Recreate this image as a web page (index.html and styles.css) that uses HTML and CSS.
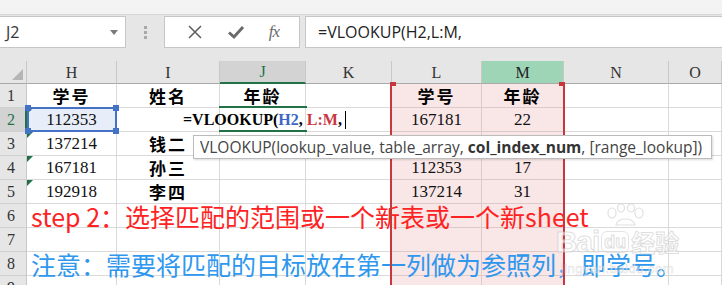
FILE: index.html
```html
<!DOCTYPE html>
<html lang="zh">
<head>
<meta charset="utf-8">
<link rel="stylesheet" href="styles.css">
</head>
<body>
<div class="app">
  <div class="topstrip"></div>
  <div class="fbar">
    <div class="namebox"><span class="nb-text">J2</span><svg class="caret" width="8" height="5" viewBox="0 0 8 5"><path d="M0 0H8L4 5Z" fill="#7a7a7a"/></svg></div>
    <div class="grip"><i></i><i></i><i></i></div>
    <div class="btns">
      <svg class="ico" width="16" height="16" viewBox="0 0 16 16"><path d="M2 2L14 14M14 2L2 14" stroke="#616161" stroke-width="1.6" fill="none"/></svg>
      <svg class="ico" width="18" height="16" viewBox="0 0 18 16"><path d="M2 8.5L7 13L16 3" stroke="#6a6a6a" stroke-width="3" fill="none"/></svg>
      <span class="fx">fx</span>
    </div>
    <div class="finput">=VLOOKUP(H2,L:M,</div>
  </div>
  <div class="sheet">
    <div class="cells">
      <div class="c hd corner"></div>
      <div class="c hd">H</div>
      <div class="c hd">I</div>
      <div class="c hd hd-sel">J</div>
      <div class="c hd">K</div>
      <div class="c hd">L</div>
      <div class="c hd hd-rng">M</div>
      <div class="c hd">N</div>
      <div class="c hd">O</div>

      <div class="c rh">1</div>
      <div class="c b">学号</div>
      <div class="c b">姓名</div>
      <div class="c b">年龄</div>
      <div class="c"></div>
      <div class="c pk b">学号</div>
      <div class="c pk b">年龄</div>
      <div class="c"></div>
      <div class="c"></div>

      <div class="c rh rh-sel">2</div>
      <div class="c tri hsel">112353</div>
      <div class="c"></div>
      <div class="c"></div>
      <div class="c"></div>
      <div class="c pk">167181</div>
      <div class="c pk">22</div>
      <div class="c"></div>
      <div class="c"></div>

      <div class="c rh">3</div>
      <div class="c tri">137214</div>
      <div class="c b">钱二</div>
      <div class="c"></div>
      <div class="c"></div>
      <div class="c pk">192918</div>
      <div class="c pk">25</div>
      <div class="c"></div>
      <div class="c"></div>

      <div class="c rh">4</div>
      <div class="c tri">167181</div>
      <div class="c b">孙三</div>
      <div class="c"></div>
      <div class="c"></div>
      <div class="c pk">112353</div>
      <div class="c pk">17</div>
      <div class="c"></div>
      <div class="c"></div>

      <div class="c rh">5</div>
      <div class="c tri">192918</div>
      <div class="c b">李四</div>
      <div class="c"></div>
      <div class="c"></div>
      <div class="c pk">137214</div>
      <div class="c pk">31</div>
      <div class="c"></div>
      <div class="c"></div>

      <div class="c rh">6</div>
      <div class="c"></div><div class="c"></div><div class="c"></div><div class="c"></div>
      <div class="c pk"></div><div class="c pk"></div><div class="c"></div><div class="c"></div>

      <div class="c rh">7</div>
      <div class="c"></div><div class="c"></div><div class="c"></div><div class="c"></div>
      <div class="c pk"></div><div class="c pk"></div><div class="c"></div><div class="c"></div>

      <div class="c rh">8</div>
      <div class="c"></div><div class="c"></div><div class="c"></div><div class="c"></div>
      <div class="c pk"></div><div class="c pk"></div><div class="c"></div><div class="c"></div>

      <div class="c rh">9</div>
      <div class="c"></div><div class="c"></div><div class="c"></div><div class="c"></div>
      <div class="c pk"></div><div class="c pk"></div><div class="c"></div><div class="c"></div>
    </div>

    <div class="overlay">
      <div class="ov-hsel"><i class="h tl"></i><i class="h tr"></i><i class="h bl"></i><i class="h br"></i></div>
      <div class="ov-active"></div>
      <div class="ov-range"><i class="rq rl"></i><i class="rq rr"></i></div>
      <div class="ov-edit"><span class="e-k">=VLOOKUP(</span><span class="e-b">H2</span><span class="e-k">,&nbsp;</span><span class="e-r">L:M</span><span class="e-k">,</span><span class="cursor"></span></div>
      <div class="ov-step">step 2：选择匹配的范围或一个新表或一个新sheet</div>
      <div class="ov-note">注意：需要将匹配的目标放在第一列做为参照列，即学号。</div>
    </div>

    <div class="tooltip"><span>VLOOKUP(lookup_value, table_array, <b>col_index_num</b>, [range_lookup])</span></div>

    <div class="wm">
      <svg class="paw" width="46" height="22" viewBox="0 0 46 22"><g fill="none" stroke="rgba(195,195,195,0.5)" stroke-width="1.2"><ellipse cx="10" cy="9" rx="4" ry="5"/><ellipse cx="19" cy="4" rx="3.5" ry="4"/><ellipse cx="29" cy="4" rx="3.5" ry="4"/><ellipse cx="37" cy="9" rx="4" ry="5"/><path d="M14 21C16 13 31 13 33 21Z"/></g></svg>
      <div class="wm-row"><span class="wm-bai">Bai</span><span class="wm-du">du</span><span class="wm-jy">经验</span></div>
      <div class="wm-url">jingyan.baidu.com</div>
    </div>
  </div>
</div>
</body>
</html>
```
FILE: styles.css
```css
* { box-sizing: border-box; }
html, body { margin: 0; padding: 0; }
body { width: 722px; height: 285px; overflow: hidden; background: #e6e6e6; }
.app { width: 722px; height: 285px; overflow: hidden; background: #e6e6e6; display: flex; flex-direction: column; }

.topstrip { height: 15px; background: #f3f3f3; border-bottom: 1px solid #d6d6d6; flex: none; }

.fbar { height: 46px; flex: none; display: flex; align-items: flex-start; padding-top: 1px; }
.namebox { width: 126px; height: 32px; background: #fff; border: 1px solid #c6c6c6; border-left: none; display: flex; align-items: center; justify-content: space-between; padding: 0 7px 0 6px; }
.nb-text { font: 16px "Open Sans", "Liberation Sans", sans-serif; color: #333; }
.caret { margin-top: 1px; }
.grip { width: 38px; height: 32px; display: flex; flex-direction: column; align-items: center; justify-content: center; gap: 2px; }
.grip i { display: block; width: 3px; height: 3px; background: #a8a8a8; }
.btns { width: 136px; height: 32px; background: #fff; border: 1px solid #c6c6c6; display: flex; align-items: center; justify-content: space-around; padding: 0 8px 0 10px; }
.fx { font: italic 17px "Liberation Serif", serif; color: #6a6a6a; letter-spacing: -1px; }
.finput { flex: 1; margin-left: 5px; height: 32px; background: #fff; border: 1px solid #c6c6c6; border-right: none; display: flex; align-items: center; padding-left: 12px; font: 16px "Open Sans", "Liberation Sans", sans-serif; color: #222; white-space: nowrap; }

.sheet { position: relative; display: grid; flex: none; }
.cells, .overlay { grid-area: 1 / 1; display: grid; grid-template-columns: 27px 90px 103px 86px 86px 90px 82px 105px 53px; grid-template-rows: 23px repeat(9, 24px); }
.overlay { pointer-events: none; position: relative; z-index: 1; }

.c { position: relative; background: #fff; border-right: 1px solid #d9d9d9; border-bottom: 1px solid #d9d9d9; display: flex; align-items: center; justify-content: center; font: 17px "Liberation Serif", "Noto Sans CJK SC", serif; color: #111; white-space: nowrap; overflow: hidden; }
.c.b { font-weight: 700; font-family: "Noto Sans CJK SC", sans-serif; font-size: 17px; letter-spacing: 2px; color: #000; }
.hd { background: #e6e6e6; border-right-color: #c8c8c8; border-bottom-color: #a9a9a9; color: #333; font-size: 16px; padding-top: 1px; }
.corner::after { content: ""; position: absolute; right: 3px; bottom: 3px; width: 0; height: 0; border-left: 11px solid transparent; border-bottom: 11px solid #b5b5b5; }
.hd-sel { background: #d3d3d3; color: #217346; border-bottom: 2px solid #217346; }
.hd-rng { background: #9fd5b7; color: #222; }
.rh { background: #e6e6e6; border-right-color: #c8c8c8; border-bottom-color: #d0d0d0; color: #333; font-size: 16px; justify-content: flex-start; padding-left: 7px; }
.rh-sel { background: #d3d3d3; color: #217346; border-right: 2px solid #217346; }
.pk { background: #f9e6e6; border-right-color: #dccaca; border-bottom-color: #dccaca; }
.hsel { background: #e7eef9; }
.tri::before { content: ""; position: absolute; left: 0; top: 0; width: 0; height: 0; border-top: 6px solid #1e7145; border-right: 6px solid transparent; }

.ov-hsel { grid-row: 3; grid-column: 2; margin: -1px 0 0 0; border: 2px solid #4472c4; position: relative; }
.h { position: absolute; width: 6px; height: 6px; background: #4472c4; }
.h.tl { left: -4px; top: -4px; }
.h.tr { right: -4px; top: -4px; }
.h.bl { left: -4px; bottom: -4px; }
.h.br { right: -4px; bottom: -4px; }
.ov-active { grid-row: 3; grid-column: 4; margin: -2px -1px 0 -1px; border-top: 2px solid #217346; border-bottom: 2px solid #217346; }
.ov-range { grid-row: 2 / 11; grid-column: 6 / 8; margin-left: -2px; margin-right: -1px; border-left: 2px solid #c8363f; border-right: 2px solid #c8363f; position: relative; }
.rq { position: absolute; top: -2px; width: 6px; height: 4px; background: #c8363f; }
.rq.rl { left: -2px; }
.rq.rr { right: -2px; }

.ov-edit { grid-row: 3; grid-column: 3 / 6; display: flex; align-items: center; padding-left: 66px; font: 700 16px "Liberation Serif", serif; white-space: nowrap; }
.e-k { color: #000; }
.e-b { color: #3c67c6; }
.e-r { color: #c8363f; }
.cursor { display: inline-block; width: 1px; height: 18px; background: #000; margin-left: 3px; }

.ov-step { grid-row: 7; grid-column: 2 / 10; display: flex; align-items: center; padding-left: 4px; font: 25px "Noto Sans CJK SC", sans-serif; color: #fe2222; white-space: nowrap; line-height: 24px; }
.ov-note { grid-row: 9; grid-column: 2 / 10; display: flex; align-items: center; padding-left: 4px; font: 25px "Noto Sans CJK SC", sans-serif; color: #2f98ee; white-space: nowrap; line-height: 24px; }

.tooltip { position: absolute; left: 193px; top: 74px; width: 519px; height: 24px; background: #fff; border: 1px solid #bcbcbc; box-shadow: 1px 1px 2px rgba(0,0,0,0.15); padding-left: 6px; display: flex; align-items: center; font: 15.5px "Open Sans", "Liberation Sans", sans-serif; color: #444; white-space: nowrap; z-index: 2; }
.tooltip b { font-weight: 700; color: #333; }

.wm { position: absolute; left: 550px; top: 143px; width: 135px; display: flex; flex-direction: column; align-items: center; pointer-events: none; z-index: 3; }
.paw { margin-left: 14px; }
.wm-row { display: flex; align-items: center; gap: 2px; margin-top: -2px; }
.wm-bai { font: 700 30px "Liberation Sans", sans-serif; color: rgba(255,255,255,0.55); -webkit-text-stroke: 1px rgba(190,190,190,0.5); letter-spacing: -1px; }
.wm-du { font: 700 18px "Liberation Sans", sans-serif; color: rgba(255,255,255,0.55); -webkit-text-stroke: 1px rgba(190,190,190,0.5); border: 1.5px solid rgba(195,195,195,0.45); border-radius: 6px; padding: 0 2px; line-height: 20px; }
.wm-jy { font: 700 24px "Noto Sans CJK SC", sans-serif; color: rgba(255,255,255,0.55); -webkit-text-stroke: 1px rgba(190,190,190,0.5); }
.wm-url { font: 13px "Liberation Sans", sans-serif; color: rgba(255,255,255,0.5); -webkit-text-stroke: 0.6px rgba(190,190,190,0.45); margin-top: 2px; letter-spacing: 0.5px; }
```
